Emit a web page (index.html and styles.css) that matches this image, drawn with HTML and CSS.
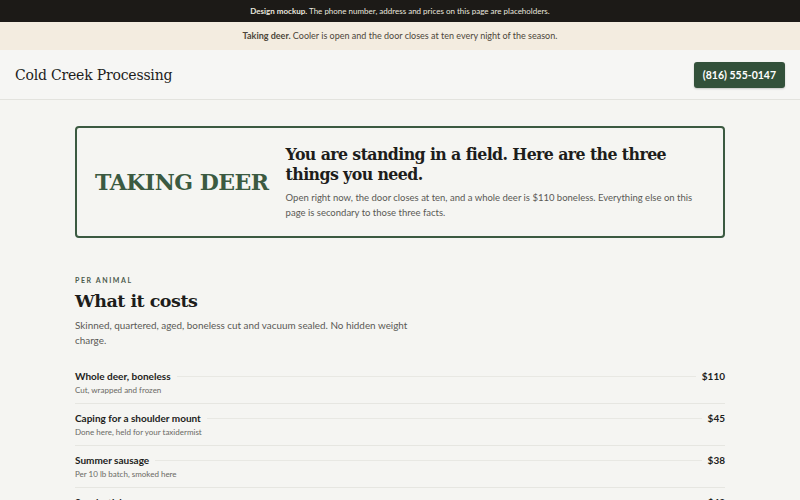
FILE: index.html
```html
<!DOCTYPE html>
<html lang="en">
<head>
  <meta charset="UTF-8">
  <title>Cold Creek Processing</title>
  <link rel="stylesheet" href="styles.css">
</head>
<body>
  <div class="mockup-bar">
    <strong>Design mockup.</strong> The phone number, address and prices on this page are placeholders.
  </div>

  <div class="season-bar">
    <strong>Taking deer.</strong> Cooler is open and the door closes at ten every night of the season.
  </div>

  <header class="site-header">
    <div class="brand">Cold Creek Processing</div>
    <a class="call-btn" href="#">(816) 555-0147</a>
  </header>

  <main class="page">
    <section class="status-card">
      <div class="status-label">TAKING DEER</div>
      <div class="status-text">
        <h1>You are standing in a field. Here are the three things you need.</h1>
        <p>Open right now, the door closes at ten, and a whole deer is $110 boneless. Everything else on this page is secondary to those three facts.</p>
      </div>
    </section>

    <section class="prices">
      <div class="eyebrow">PER ANIMAL</div>
      <h2>What it costs</h2>
      <p class="intro">Skinned, quartered, aged, boneless cut and vacuum sealed. No hidden weight charge.</p>

      <ul class="price-list">
        <li class="price-row">
          <div class="price-top">
            <span class="item-name">Whole deer, boneless</span>
            <span class="leader"></span>
            <span class="item-price">$110</span>
          </div>
          <div class="item-note">Cut, wrapped and frozen</div>
        </li>
        <li class="price-row">
          <div class="price-top">
            <span class="item-name">Caping for a shoulder mount</span>
            <span class="leader"></span>
            <span class="item-price">$45</span>
          </div>
          <div class="item-note">Done here, held for your taxidermist</div>
        </li>
        <li class="price-row">
          <div class="price-top">
            <span class="item-name">Summer sausage</span>
            <span class="leader"></span>
            <span class="item-price">$38</span>
          </div>
          <div class="item-note">Per 10 lb batch, smoked here</div>
        </li>
        <li class="price-row">
          <div class="price-top">
            <span class="item-name">Snack sticks</span>
            <span class="leader"></span>
            <span class="item-price">$42</span>
          </div>
          <div class="item-note">Per 10 lb batch</div>
        </li>
      </ul>
    </section>
  </main>
</body>
</html>
```

FILE: styles.css
```css
body {
  margin: 0;
  padding: 0;
  background: #f5f5f2;
  font-family: Lato, 'Noto Sans', sans-serif;
  color: #1d1d1b;
}

.mockup-bar {
  background: #1c1a17;
  color: #e9e6df;
  font-size: 8px;
  height: 22px;
  line-height: 22px;
  text-align: center;
}

.season-bar {
  background: #f3ece0;
  color: #4d463a;
  font-size: 9px;
  height: 28px;
  line-height: 28px;
  text-align: center;
}

.site-header {
  display: flex;
  justify-content: space-between;
  align-items: center;
  height: 49px;
  padding: 0 15px;
  background: #f6f6f4;
  border-bottom: 1px solid #e3e3de;
}

.brand {
  font-family: 'DejaVu Serif', serif;
  font-size: 14px;
  letter-spacing: -0.2px;
  color: #1d1d1b;
}

.call-btn {
  background: #33513a;
  color: #fff;
  font-weight: bold;
  font-size: 10.5px;
  text-decoration: none;
  padding: 7px 9px;
  border-radius: 3px;
  box-shadow: 0 1px 2px rgba(0,0,0,0.2);
}

.page {
  max-width: 650px;
  margin: 0 auto;
  padding: 26px 0 0;
}

.status-card {
  display: flex;
  align-items: center;
  gap: 17px;
  border: 2px solid #3b5a41;
  border-radius: 4px;
  padding: 16px 18px;
  height: 112px;
  box-sizing: border-box;
}

.status-label {
  font-family: 'DejaVu Serif', serif;
  font-weight: bold;
  font-size: 22px;
  letter-spacing: -0.5px;
  color: #3b5a41;
  white-space: nowrap;
}

.status-text h1 {
  font-family: 'DejaVu Serif', serif;
  font-size: 15.8px;
  letter-spacing: -0.6px;
  line-height: 20px;
  margin: 0 0 5px;
}

.status-text p {
  margin: 0;
  font-size: 9.5px;
  line-height: 15px;
  color: #5a5955;
}

.prices {
  padding-top: 38px;
}

.eyebrow {
  font-size: 7px;
  font-weight: bold;
  letter-spacing: 1.6px;
  color: #4b5a4c;
}

.prices h2 {
  font-family: 'DejaVu Serif', serif;
  font-size: 17.5px;
  letter-spacing: -0.5px;
  margin: 7px 0 7px;
}

.intro {
  max-width: 345px;
  margin: 0 0 14px;
  font-size: 9.9px;
  line-height: 15px;
  color: #5a5955;
}

.price-list {
  list-style: none;
  margin: 0;
  padding: 0;
}

.price-row {
  padding: 8px 0;
  border-bottom: 1px solid #e6e6e1;
}

.price-top {
  display: flex;
  align-items: center;
  gap: 6px;
}

.item-name {
  font-weight: bold;
  font-size: 10px;
}

.leader {
  flex: 1;
  height: 1px;
  background: #e8e8e3;
}

.item-price {
  font-weight: bold;
  font-size: 10px;
}

.item-note {
  margin-top: 3px;
  font-size: 8px;
  color: #6a6964;
}
```
